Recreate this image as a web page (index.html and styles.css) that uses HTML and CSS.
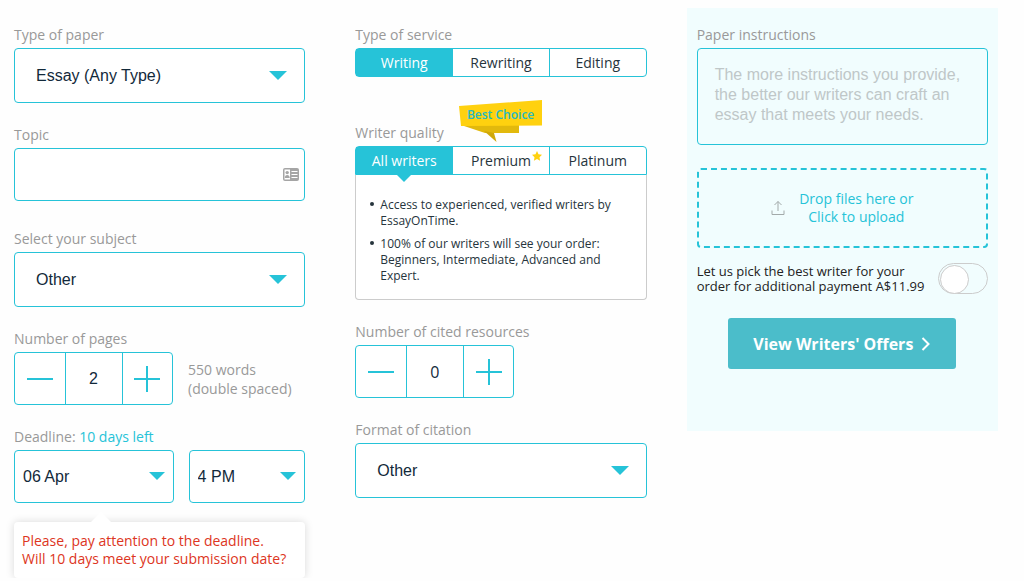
FILE: index.html
```html
<!DOCTYPE html>
<html lang="en">

<head>
  <meta charset="UTF-8">
  <meta name="viewport" content="width=device-width, initial-scale=1.0">
  <title>Order form</title>
  <link rel="stylesheet" href="styles.css">
</head>

<body>
  <form class="order">
    <div class="column">
      <div class="field">
        <label class="label" for="paper">Type of paper</label>
        <div class="select">
          <select id="paper">
            <option>Essay (Any Type)</option>
          </select>
        </div>
      </div>

      <div class="field topic">
        <label class="label" for="topic">Topic</label>
        <div class="text-box">
          <input type="text" id="topic">
          <svg class="card-icon" width="16" height="13" viewBox="0 0 16 13" aria-hidden="true">
            <rect width="16" height="13" rx="2" fill="#a5a5a5" />
            <rect x="1.5" y="1.5" width="5.5" height="10" fill="#fff" />
            <circle cx="4.2" cy="4.6" r="1.7" fill="#a5a5a5" />
            <path d="M1.8 10c0-2 .9-3 2.4-3s2.5 1 2.5 3z" fill="#a5a5a5" />
            <path d="M8.5 3.5h6M8.5 6.5h6M8.5 9.5h6" stroke="#fff" stroke-width="1.2" />
          </svg>
        </div>
      </div>

      <div class="field">
        <label class="label" for="subject">Select your subject</label>
        <div class="select">
          <select id="subject">
            <option>Other</option>
          </select>
        </div>
      </div>

      <div class="field">
        <label class="label" for="pages">Number of pages</label>
        <div class="row">
          <div class="stepper">
            <button type="button" aria-label="Fewer pages">
              <svg width="26" height="26" viewBox="0 0 26 26"><path d="M0 13h26" /></svg>
            </button>
            <input type="text" id="pages" value="2">
            <button type="button" aria-label="More pages">
              <svg width="26" height="26" viewBox="0 0 26 26"><path d="M0 13h26M13 0v26" /></svg>
            </button>
          </div>
          <p class="words">550 words<br>(double spaced)</p>
        </div>
      </div>

      <div class="field">
        <label class="label" for="date">Deadline: <span class="left">10 days left</span></label>
        <div class="row">
          <div class="select small date">
            <select id="date">
              <option>06 Apr</option>
            </select>
          </div>
          <div class="select small time">
            <select id="time" aria-label="Time">
              <option>4 PM</option>
            </select>
          </div>
        </div>
        <p class="hint">Please, pay attention to the deadline.<br>Will 10 days meet your submission date?</p>
      </div>
    </div>

    <div class="column">
      <fieldset class="field service">
        <legend class="label">Type of service</legend>
        <div class="tabs">
          <label class="tab"><input type="radio" name="service" checked>Writing</label>
          <label class="tab"><input type="radio" name="service">Rewriting</label>
          <label class="tab"><input type="radio" name="service">Editing</label>
        </div>
      </fieldset>

      <fieldset class="field">
        <legend class="label">Writer quality</legend>
        <div class="tabs quality">
          <label class="tab"><input type="radio" name="quality" checked>All writers</label>
          <label class="tab">
            <input type="radio" name="quality">Premium
            <svg class="star" width="10" height="10" viewBox="0 0 10 10" aria-hidden="true">
              <path d="M5 0l1.5 3.2 3.5.5-2.5 2.5.6 3.6L5 8.100 1.900 9.800l.6-3.600L0 3.700l3.500-.5z" fill="#ffd10f" />
            </svg>
            <span class="ribbon">
              <svg width="83" height="42" viewBox="0 0 83 42" aria-hidden="true">
                <path d="M2 25h58v8H26z" fill="#e2b90c" />
                <path d="M25 31l10 2 2.500 9z" fill="#cfa80a" />
                <path d="M0 6L83 0v25.500L2 26z" fill="#ffd10f" />
              </svg>
              <span class="ribbon-text">Best Choice</span>
            </span>
          </label>
          <label class="tab"><input type="radio" name="quality">Platinum</label>
        </div>
        <ul class="details">
          <li>Access to experienced, verified writers by EssayOnTime.</li>
          <li>100% of our writers will see your order: Beginners, Intermediate, Advanced and Expert.</li>
        </ul>
      </fieldset>

      <div class="field">
        <label class="label" for="resources">Number of cited resources</label>
        <div class="row">
          <div class="stepper">
            <button type="button" aria-label="Fewer resources">
              <svg width="26" height="26" viewBox="0 0 26 26"><path d="M0 13h26" /></svg>
            </button>
            <input type="text" id="resources" class="count" value="0">
            <button type="button" aria-label="More resources">
              <svg width="26" height="26" viewBox="0 0 26 26"><path d="M0 13h26M13 0v26" /></svg>
            </button>
          </div>
        </div>
      </div>

      <div class="field">
        <label class="label" for="format">Format of citation</label>
        <div class="select">
          <select id="format">
            <option>Other</option>
          </select>
        </div>
      </div>
    </div>

    <div class="column panel">
      <label class="label" for="instructions">Paper instructions</label>
      <textarea id="instructions" placeholder="The more instructions you provide, the better our writers can craft an essay that meets your needs."></textarea>

      <button type="button" class="drop">
        <svg width="14" height="16" viewBox="0 0 14 16" aria-hidden="true">
          <path d="M1 10.5v4h12v-4M7 11V1.5M3.5 5L7 1.5 10.5 5" fill="none" stroke="#a3aaaa" />
        </svg>
        <span>Drop files here or<br>Click to upload</span>
      </button>

      <div class="pick">
        <label for="pick">Let us pick the best writer for your order for additional payment A$11.99</label>
        <input type="checkbox" id="pick" class="toggle">
      </div>

      <button type="submit" class="submit">
        View Writers' Offers
        <svg width="10" height="14" viewBox="0 0 10 14" aria-hidden="true">
          <path d="M1.5 1l6 6-6 6" fill="none" stroke="#fff" stroke-width="2" />
        </svg>
      </button>
    </div>
  </form>
</body>

</html>
```
FILE: styles.css
```css
* {
  margin: 0;
  padding: 0;
  box-sizing: border-box;
}

body {
  background: #fefefe;
  color: #26343c;
  font-family: "Open Sans", "Noto Sans", sans-serif;
  font-size: 14px;
}

button,
input,
select,
textarea {
  font-family: inherit;
  font-size: 14px;
  color: inherit;
  border: none;
  background: transparent;
  outline: none;
}

fieldset {
  border: none;
  min-width: 0;
}

.order {
  display: grid;
  grid-template-columns: repeat(3, minmax(0, 1fr));
  gap: 50px;
  align-items: start;
  padding: 8px 36px 0 14px;
}

.column {
  display: flex;
  flex-direction: column;
  gap: 22px;
  padding-top: 17px;
}

.label {
  display: block;
  height: 20px;
  margin-bottom: 3px;
  line-height: 20px;
  color: #999;
}

.left {
  color: #26c3d8;
}

.row {
  display: flex;
  align-items: center;
  gap: 15px;
}

/* selects and inputs */

.select {
  position: relative;
  height: 55px;
}

.select::after {
  content: "";
  position: absolute;
  top: 50%;
  right: 18px;
  margin-top: -5px;
  border: 9px solid transparent;
  border-top-color: #26c3d8;
  border-bottom: none;
  pointer-events: none;
}

.select select {
  appearance: none;
  width: 100%;
  height: 100%;
  padding: 0 40px 0 21px;
  border: 1px solid #26c3d8;
  border-radius: 4px;
  background: #fff;
  color: #12293a;
  font-family: "Liberation Sans", Arial, sans-serif;
  font-size: 16px;
}

.select.small {
  height: 53px;
}

.select.small::after {
  right: 9px;
  border-width: 8px;
  border-bottom: none;
}

.select.small select {
  padding: 0 28px 0 8px;
}

.date {
  flex: 160 0 0;
}

.time {
  flex: 117 0 0;
}

.topic {
  margin-bottom: 6px;
}

.text-box {
  display: flex;
  align-items: center;
  height: 53px;
  padding-right: 5px;
  border: 1px solid #26c3d8;
  border-radius: 4px;
  background: #fff;
}

.text-box input {
  flex: 1;
  min-width: 0;
  height: 100%;
  padding: 0 21px;
}

.stepper {
  display: flex;
  width: 159px;
  height: 53px;
  border: 1px solid #26c3d8;
  border-radius: 4px;
  background: #fff;
}

.stepper button {
  display: flex;
  flex: 1;
  justify-content: center;
  align-items: center;
}

.stepper svg {
  stroke: #26c3d8;
  stroke-width: 2;
}

.stepper input {
  width: 58px;
  border: 1px solid #26c3d8;
  border-width: 0 1px;
  color: #12293a;
  font-family: "Liberation Sans", Arial, sans-serif;
  font-size: 16px;
  text-align: center;
}

.stepper .count {
  font-family: inherit;
}

.words {
  line-height: 19px;
  color: #999;
}

.hint {
  position: relative;
  margin-top: 19px;
  padding: 10px 8px;
  border-radius: 4px;
  background: #fff;
  box-shadow: 0 0 8px rgba(0, 0, 0, 0.15);
  color: #dd3522;
  line-height: 18px;
}

.hint::before {
  content: "";
  position: absolute;
  top: -10px;
  left: 77px;
  border: 10px solid transparent;
  border-bottom-color: #fff;
  border-top: none;
}

/* tabs */

.service {
  margin-bottom: 24px;
}

.tabs {
  display: flex;
  height: 29px;
  border: 1px solid #26c3d8;
  border-radius: 4px;
  background: #fff;
}

.tab {
  position: relative;
  display: flex;
  flex: 1 0 0;
  justify-content: center;
  align-items: center;
}

.tab + .tab {
  border-left: 1px solid #26c3d8;
}

.tab input {
  position: absolute;
  opacity: 0;
}

.tab:has(:checked) {
  background: #26c3d8;
  color: #fff;
}

.quality {
  border-radius: 4px 4px 0 0;
}

.quality .tab:has(:checked)::after {
  content: "";
  position: absolute;
  top: 100%;
  left: 50%;
  margin-left: -8px;
  border: 8px solid transparent;
  border-top-color: #26c3d8;
  border-bottom: none;
}

.star {
  position: absolute;
  top: 4px;
  right: 7px;
}

.ribbon {
  position: absolute;
  bottom: 32px;
  left: 6px;
  width: 83px;
  height: 42px;
}

.ribbon-text {
  position: absolute;
  top: 6px;
  left: 0;
  width: 100%;
  color: #26b9c4;
  font-size: 12px;
  font-weight: 600;
  line-height: 18px;
  text-align: center;
}

.details {
  padding: 22px 24px 15px;
  border: 1px solid #ccc;
  border-top: none;
  border-radius: 0 0 4px 4px;
  background: #fff;
  font-size: 12px;
  line-height: 16px;
  list-style: none;
}

.details li {
  position: relative;
}

.details li + li {
  margin-top: 7px;
}

.details li::before {
  content: "";
  position: absolute;
  top: 5px;
  left: -10px;
  width: 4px;
  height: 4px;
  border-radius: 50%;
  background: #26343c;
}

/* right panel */

.panel {
  gap: 0;
  margin: 0 -10px;
  padding: 17px 10px 62px;
  background: #f1fdfe;
}

.panel textarea {
  height: 97px;
  padding: 16px 17px;
  border: 1px solid #26c3d8;
  border-radius: 4px;
  color: #12293a;
  font-family: "Liberation Sans", Arial, sans-serif;
  font-size: 16px;
  line-height: 20px;
  resize: none;
}

.panel textarea::placeholder {
  color: #bfc7c8;
}

.drop {
  display: flex;
  justify-content: center;
  align-items: center;
  gap: 14px;
  height: 80px;
  margin-top: 23px;
  border: 2px dashed #26c3d8;
  border-radius: 4px;
  color: #26c3d8;
  line-height: 18px;
}

.pick {
  display: flex;
  justify-content: space-between;
  align-items: center;
  gap: 10px;
  margin-top: 15px;
  color: #222;
  font-size: 13px;
  line-height: 15px;
}

.toggle {
  appearance: none;
  flex: none;
  width: 50px;
  height: 31px;
  padding: 1px;
  border: 1px solid #ccc;
  border-radius: 16px;
}

.toggle::before {
  content: "";
  display: block;
  width: 27px;
  height: 27px;
  border: 1px solid #ccc;
  border-radius: 50%;
  background: #fff;
}

.toggle:checked::before {
  margin-left: auto;
}

.submit {
  display: flex;
  align-self: center;
  align-items: center;
  gap: 8px;
  height: 51px;
  margin-top: 24px;
  padding: 0 25px;
  border-radius: 3px;
  background: #4bbdca;
  color: #fff;
  font-size: 16px;
  font-weight: 700;
}
```
